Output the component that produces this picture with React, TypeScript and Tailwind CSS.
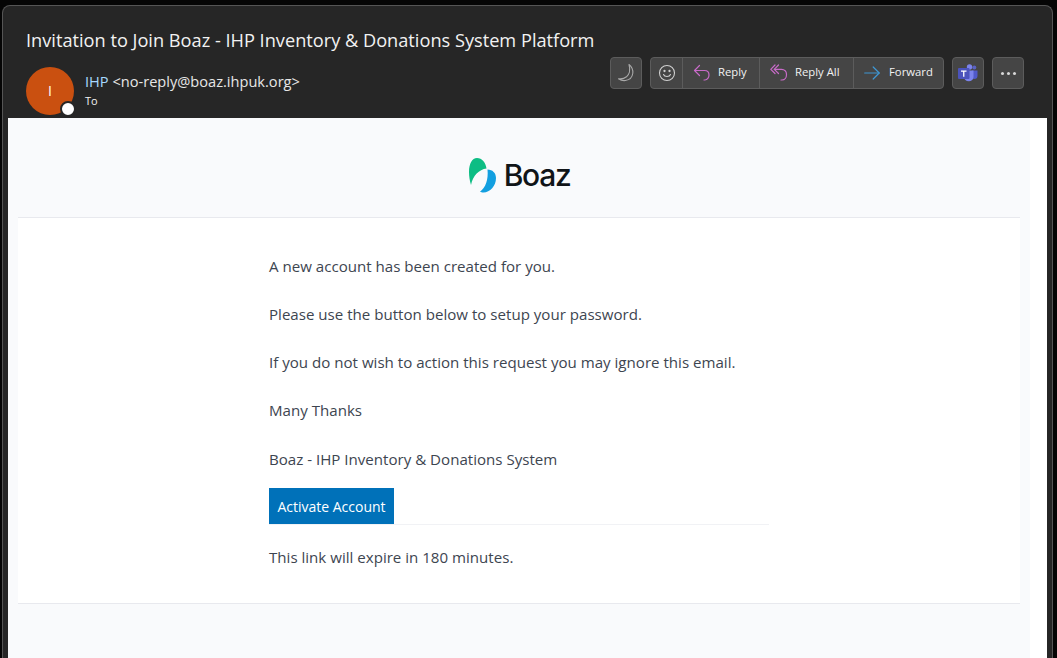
const ui = { fontFamily: '"Open Sans", "Noto Sans", sans-serif' };

function Moon() {
  return (
    <svg width="20" height="20" viewBox="0 0 20 20" fill="none">
      <path d="M13 1.500C16 4 17.200 7 16.800 10.300c-.5 3.800-3.500 6.700-7.300 7.200-2.600.3-5-.3-7-1.700 3 .4 5.800-.2 8-2 3-2.700 3.800-7.700 2.500-12.300z" stroke="#a8a8a8" strokeWidth="1.100" strokeLinejoin="round" />
    </svg>
  );
}

function Smile() {
  return (
    <svg width="18" height="18" viewBox="0 0 18 18" fill="none" stroke="#cfcfcf" strokeWidth="1.100">
      <circle cx="9" cy="9" r="7.500" />
      <path d="M5.500 10.500c1 2.600 6 2.600 7 0" strokeLinecap="round" />
      <circle cx="6.500" cy="7" r=".6" fill="#cfcfcf" />
      <circle cx="11.500" cy="7" r=".6" fill="#cfcfcf" />
    </svg>
  );
}

function ReplyIcon() {
  return (
    <svg width="18" height="18" viewBox="0 0 18 18" fill="none" stroke="#c86bc8" strokeWidth="1.200" strokeLinecap="round" strokeLinejoin="round">
      <path d="M6.500 1.500 1.500 6.500l5 5" />
      <path d="M1.500 6.500h10c2.800 0 4.500 2 4.500 4.500s-1.700 5-4 5h-1" />
    </svg>
  );
}

function ReplyAllIcon() {
  return (
    <svg width="18" height="18" viewBox="0 0 18 18" fill="none" stroke="#c86bc8" strokeWidth="1.200" strokeLinecap="round" strokeLinejoin="round">
      <path d="M5 1 .8 5.300 5 9.500" />
      <path d="M8.500 1 4.300 5.300l4.200 4.200" />
      <path d="M4.300 5.300h7.200c3 0 5 2.200 5 5.200s-1.700 5.500-4.500 5.500h-1" />
    </svg>
  );
}

function ForwardIcon() {
  return (
    <svg width="16" height="14" viewBox="0 0 16 14" fill="none" stroke="#3f96d1" strokeWidth="1.200" strokeLinecap="round" strokeLinejoin="round">
      <path d="M.7 7h14.500" />
      <path d="M9.200 1l6 6-6 6" />
    </svg>
  );
}

function Teams() {
  return (
    <svg width="20" height="18" viewBox="0 0 20 18">
      <circle cx="16.300" cy="3.500" r="2" fill="#5a62c3" />
      <circle cx="11.500" cy="3" r="2.700" fill="#7b83eb" />
      <path d="M14 6.500h5.500v5.500c0 1.700-1.300 3-3 3-1 0-1.900-.4-2.500-1z" fill="#5059c9" />
      <path d="M6 6.500h9.500v6.500c0 2.500-2 4.300-4.700 4.300S6 15.500 6 13z" fill="#7b83eb" />
      <rect x="0" y="4" width="11.500" height="11" rx="1" fill="#4b53bc" />
      <path d="M3 6.500h5.500v1.300H6.400v5H5.100v-5H3z" fill="#ffffff" />
    </svg>
  );
}

function Logo() {
  return (
    <svg width="28" height="35" viewBox="0 0 28 35">
      <path d="M8 0c5 0 8.700 4.500 9.500 10.500C10 11.500 4 17.500 2 27 .7 23 0 18 0 14 0 6 3 0 8 0z" fill="#0dbd84" />
      <path d="M18.500 11.500c5 0 8.500 3.500 8.500 8.500 0 8-6 14.500-12.500 14.500-1.500 0-2.500-.2-3.500-.7 5.500-4 8.500-12 7.500-22.300z" fill="#139fe0" />
    </svg>
  );
}

const paragraphs = [
  "A new account has been created for you.",
  "Please use the button below to setup your password.",
  "If you do not wish to action this request you may ignore this email.",
  "Many Thanks",
];

export default function App() {
  return (
    <div className="h-[658px] w-[1057px] overflow-hidden bg-[#050505] pl-[2px] pr-[4px] pt-[5px]" style={ui}>
      <div className="flex h-[653px] flex-col overflow-hidden rounded-t-lg border border-b-0 border-[#555555] bg-[#262626]">
        <header className="flex h-[112px] shrink-0 justify-between pl-[23px] pr-[28px]">
          <div>
            <h1 className="mt-[22px] text-[18.200px] leading-[24px] font-normal text-[#f2f2f2]">
              Invitation to Join Boaz - IHP Inventory &amp; Donations System Platform
            </h1>
            <div className="mt-[15px] flex">
              <div className="relative flex h-12 w-12 items-center justify-center rounded-full bg-[#ca5010] text-sm text-white">
                I
                <span className="absolute bottom-[-2px] right-[-2px] h-[16px] w-[16px] rounded-full border-[2px] border-[#262626] bg-white" />
              </div>
              <div className="ml-[11px] mt-[4px]">
                <div className="text-[14.600px] leading-[20px] text-[#e6e6e6]">
                  <span className="text-[#a6d8ff]">IHP</span> &lt;no-reply@boaz.ihpuk.org&gt;
                </div>
                <div className="mt-[2px] text-[11px] leading-[16px] text-[#f2f2f2]">To</div>
              </div>
            </div>
          </div>
          <div className="mt-[51px] flex h-[32px] gap-2">
            <button className="flex h-8 w-8 items-center justify-center rounded border border-[#5c5c5c] bg-[#454545]"><Moon /></button>
            <div className="flex h-8 w-[294px] divide-x divide-[#5c5c5c] rounded border border-[#5c5c5c] bg-[#454545] text-[11.300px] text-[#f2f2f2]">
              <button className="flex w-[32px] items-center justify-center"><Smile /></button>
              <button className="flex w-[77px] items-center gap-[7px] pl-[10px]"><ReplyIcon /><span className="-mt-px">Reply</span></button>
              <button className="flex w-[94px] items-center gap-[7px] pl-[10px]"><ReplyAllIcon /><span className="-mt-px">Reply All</span></button>
              <button className="flex flex-1 items-center gap-[9px] pl-[10px]"><ForwardIcon /><span className="-mt-px">Forward</span></button>
            </div>
            <button className="flex h-8 w-8 items-center justify-center rounded border border-[#5c5c5c] bg-[#454545]"><Teams /></button>
            <button className="flex h-8 w-8 items-center justify-center gap-[3px] rounded border border-[#5c5c5c] bg-[#454545]">
              <span className="h-[3px] w-[3px] rounded-full bg-[#d8d8d8]" />
              <span className="h-[3px] w-[3px] rounded-full bg-[#d8d8d8]" />
              <span className="h-[3px] w-[3px] rounded-full bg-[#d8d8d8]" />
            </button>
          </div>
        </header>
        <div className="ml-[5px] mr-[5px] flex min-h-0 flex-1 bg-white">
          <div className="w-[1022px] bg-[#f9fafc] px-[10px]">
            <div className="flex h-[99px] items-center justify-center gap-[7px] pl-[1px] pt-[15px]">
              <Logo />
              <span className="text-[30px] leading-none font-medium tracking-[-1.300px] text-[#101418]" style={{ fontFamily: "Inter, sans-serif" }}>Boaz</span>
            </div>
            <div className="h-[387px] border-y border-[#e8e9ee] bg-white">
              <div className="mx-auto w-[500px] pt-[36px] text-[15.100px] text-[#3d4550]">
                {paragraphs.map((p) => (
                  <p key={p} className="mb-[24px] h-[24px] leading-[24px]">{p}</p>
                ))}
                <p className="mt-[25px] h-[24px] leading-[24px]">Boaz - IHP Inventory &amp; Donations System</p>
                <div className="mt-[17px] h-[37px] border-b border-[#f1f2f5]">
                  <a className="inline-flex h-[36px] w-[125px] items-center justify-center bg-[#0071b9] text-[14px] text-white">Activate Account</a>
                </div>
                <p className="mt-[20px] leading-[24px]">This link will expire in 180 minutes.</p>
              </div>
            </div>
          </div>
        </div>
      </div>
    </div>
  );
}
